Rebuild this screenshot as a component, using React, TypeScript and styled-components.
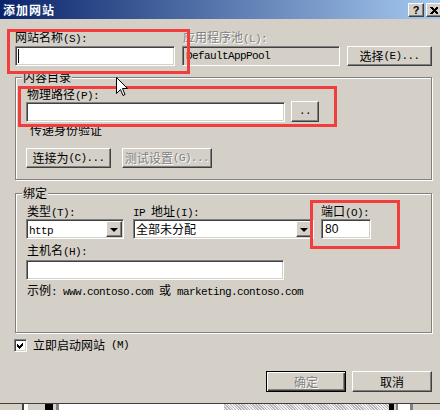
import React from 'react';
import styled, { createGlobalStyle, css } from 'styled-components';

const BG = '#d4d0c8';

const GlobalStyle = createGlobalStyle`
  html, body { margin: 0; padding: 0; background: ${BG}; }
  body { font-family: "Noto Sans CJK SC", "Liberation Sans", sans-serif; font-size: 12px; }
  * { box-sizing: border-box; }
`;

const Window = styled.div`
  position: relative;
  width: 440px;
  height: 410px;
  overflow: hidden;
  background: ${BG};
  display: flex;
  flex-direction: column;
  color: #000;
  font-family: "Noto Sans CJK SC", "Liberation Sans", sans-serif;
  font-size: 12px;
  line-height: 14px;
`;

const TitleBar = styled.div`
  flex: none;
  height: 19px;
  display: flex;
  align-items: flex-start;
  padding-left: 3px;
  background: linear-gradient(to right, #0a246a, #a6caf0);
`;

const Title = styled.div`
  flex: 1;
  margin-top: 2px;
  color: #fff;
  font-weight: bold;
  letter-spacing: 1px;
  line-height: 15px;
`;

const CaptionButtons = styled.div`
  display: flex;
  gap: 2px;
  margin: 3px -2px 0 0;
`;

const raised = css`
  border: 1px solid;
  border-color: #fff #404040 #404040 #fff;
  box-shadow: inset -1px -1px 0 #808080;
  background: ${BG};
`;

const sunken = css`
  border: 1px solid;
  border-color: #808080 #fff #fff #808080;
  box-shadow: inset 1px 1px 0 #404040, inset -1px -1px 0 ${BG};
`;

const CaptionButton = styled.div`
  ${raised};
  width: 16px;
  height: 14px;
  display: flex;
  align-items: center;
  justify-content: center;
  font-family: "Liberation Sans", sans-serif;
  font-weight: bold;
  font-size: 11px;
  line-height: 11px;
`;

const Content = styled.div`
  flex: 1;
  display: flex;
  flex-direction: column;
  padding: 11px 8px 0 15px;
`;

const Latin = styled.span`
  font-family: "Liberation Mono", monospace;
  font-size: 11px;
  letter-spacing: -0.6px;
  line-height: 1;
  white-space: pre;
`;

const disabledText = css`
  color: #808080;
  text-shadow: 1px 1px 0 #fff;
`;

const Label = styled.div<{ $disabled?: boolean; $indent?: number; $mt?: number }>`
  height: 14px;
  line-height: 14px;
  white-space: nowrap;
  padding-left: ${(p) => p.$indent ?? 0}px;
  margin-top: ${(p) => p.$mt ?? 0}px;
  ${(p) => p.$disabled && disabledText};
`;

const TopGrid = styled.div`
  display: grid;
  grid-template-columns: 160px 158px 85px;
  grid-template-rows: 14px 20px;
  column-gap: 7px;
  row-gap: 2px;
`;

const Field = styled.div<{ $w?: number; $disabled?: boolean; $mt?: number }>`
  ${sunken};
  width: ${(p) => (p.$w ? `${p.$w}px` : 'auto')};
  height: 20px;
  margin-top: ${(p) => p.$mt ?? 0}px;
  background: ${(p) => (p.$disabled ? BG : '#fff')};
  display: flex;
  align-items: center;
  padding: 0 2px 0 3px;
  white-space: nowrap;
`;

const Caret = styled.div`
  width: 1px;
  height: 14px;
  background: #000;
  margin-left: -1px;
`;

const Button = styled.div<{ $w: number; $h?: number; $default?: boolean; $disabled?: boolean }>`
  ${raised};
  width: ${(p) => p.$w}px;
  height: ${(p) => p.$h ?? 20}px;
  display: flex;
  align-items: center;
  justify-content: center;
  white-space: nowrap;
  ${(p) =>
    p.$default &&
    css`
      border: 1px solid #000;
      box-shadow: inset 1px 1px 0 #fff, inset -1px -1px 0 #404040, inset -2px -2px 0 #808080;
    `};
  ${(p) => p.$disabled && disabledText};
`;

const GroupBox = styled.div<{ $mt: number; $pb: number }>`
  margin-top: ${(p) => p.$mt}px;
  padding: 0 10px ${(p) => p.$pb}px 10px;
  border: 1px solid #808080;
  box-shadow: inset 1px 1px 0 #fff, 1px 1px 0 #fff;
`;

const Legend = styled.div`
  width: fit-content;
  margin: -8px 0 0 -4px;
  padding: 0 1px;
  height: 14px;
  background: ${BG};
  white-space: nowrap;
`;

const PathRow = styled.div`
  display: flex;
  align-items: flex-end;
  gap: 6px;
`;

const ButtonRow = styled.div<{ $mt: number; $gap: number }>`
  display: flex;
  gap: ${(p) => p.$gap}px;
  margin-top: ${(p) => p.$mt}px;
`;

const BindRow = styled.div`
  display: flex;
  margin-top: 4px;
`;

const BindCol = styled.div<{ $w: number; $ml?: number }>`
  width: ${(p) => p.$w}px;
  margin-left: ${(p) => p.$ml ?? 0}px;
  display: flex;
  flex-direction: column;
  gap: 1px;
`;

const Select = styled(Field)`
  padding: 1px 1px 1px 2px;
  justify-content: space-between;
`;

const SelectText = styled.div`
  flex: 1;
  line-height: 14px;
`;

const DropButton = styled.div`
  ${raised};
  flex: none;
  width: 16px;
  align-self: stretch;
  display: flex;
  align-items: center;
  justify-content: center;
`;

const DownArrow = styled.div`
  width: 0;
  height: 0;
  border-left: 4px solid transparent;
  border-right: 4px solid transparent;
  border-top: 4px solid #000;
  margin-top: 1px;
`;

const PortText = styled.span`
  font-family: "Liberation Sans", sans-serif;
  font-size: 12px;
`;

const CheckRow = styled.div`
  display: flex;
  align-items: center;
  gap: 6px;
  margin: 5px 0 0 -1px;
`;

const CheckBox = styled.div`
  ${sunken};
  width: 13px;
  height: 13px;
  background: #fff;
  display: flex;
  align-items: center;
  justify-content: center;
`;

const Footer = styled.div`
  display: flex;
  justify-content: flex-end;
  gap: 6px;
  margin-top: 19px;
`;

const Strip = styled.div`
  flex: none;
  height: 7px;
  display: flex;
  border-top: 1px solid #404040;
`;

const StripSeg = styled.div<{ $w: number; $c: string; $hatch?: boolean }>`
  width: ${(p) => p.$w}px;
  background: ${(p) => p.$c};
  ${(p) =>
    p.$hatch &&
    css`
      background-image: repeating-linear-gradient(45deg, #b8b8b8 0 1px, #f0f0f0 1px 2px);
    `};
`;

const Annotation = styled.div<{ $x: number; $y: number; $w: number; $h: number }>`
  position: absolute;
  left: ${(p) => p.$x}px;
  top: ${(p) => p.$y}px;
  width: ${(p) => p.$w}px;
  height: ${(p) => p.$h}px;
  border: 3px solid #f23d3d;
  pointer-events: none;
`;

const Cursor = styled.svg`
  position: absolute;
  left: 116px;
  top: 77px;
  pointer-events: none;
`;

function Txt({ children }: { children: string }) {
  const parts = children.split(/([\u0000-\u00ff]+)/).filter(Boolean);
  return (
    <>
      {parts.map((p, i) =>
        /^[\u0000-\u00ff]+$/.test(p) ? <Latin key={i}>{p}</Latin> : <span key={i}>{p}</span>
      )}
    </>
  );
}

const strip: [number, string, boolean?][] = [
  [22, BG],
  [2, '#404040'],
  [4, '#fff'],
  [17, BG],
  [8, '#000'],
  [3, BG],
  [3, '#808080'],
  [165, '#fff'],
  [165, '#e8e8e8', true],
  [5, '#000'],
  [2, BG],
  [2, '#808080'],
  [12, '#fff'],
  [3, '#808080'],
  [27, BG],
];

export default function App() {
  return (
    <>
      <GlobalStyle />
      <Window>
        <TitleBar>
          <Title>添加网站</Title>
          <CaptionButtons>
            <CaptionButton>?</CaptionButton>
            <CaptionButton>
              <svg width="8" height="7" viewBox="0 0 8 7" shapeRendering="crispEdges">
                <path d="M0 0h2l2 2 2-2h2v1L5.5 3.5 8 6v1H6L4 5 2 7H0V6l2.5-2.5L0 1z" fill="#000" />
              </svg>
            </CaptionButton>
          </CaptionButtons>
        </TitleBar>

        <Content>
          <TopGrid>
            <Label><Txt>网站名称(S):</Txt></Label>
            <Label $disabled $indent={1}><Txt>应用程序池(L):</Txt></Label>
            <div />
            <Field>
              <Caret />
            </Field>
            <Field $disabled>
              <Txt>DefaultAppPool</Txt>
            </Field>
            <Button $w={85}><Txt>选择(E)...</Txt></Button>
          </TopGrid>

          <GroupBox $mt={11} $pb={11}>
            <Legend>内容目录</Legend>
            <Label $indent={1} $mt={3}><Txt>物理路径(P):</Txt></Label>
            <PathRow>
              <Field $w={259} />
              <Button $w={28} $h={21}><Txt>..</Txt></Button>
            </PathRow>
            <Label $indent={4} $mt={1}>传递身份验证</Label>
            <ButtonRow $mt={11} $gap={11}>
              <Button $w={85}><Txt>连接为(C)...</Txt></Button>
              <Button $w={90} $disabled><Txt>测试设置(G)...</Txt></Button>
            </ButtonRow>
          </GroupBox>

          <GroupBox $mt={13} $pb={35}>
            <Legend>绑定</Legend>
            <BindRow>
              <BindCol $w={98}>
                <Label $indent={1}><Txt>类型(T):</Txt></Label>
                <Select>
                  <SelectText><Txt>http</Txt></SelectText>
                  <DropButton><DownArrow /></DropButton>
                </Select>
              </BindCol>
              <BindCol $w={181} $ml={9}>
                <Label><Txt>IP 地址(I):</Txt></Label>
                <Select>
                  <SelectText>全部未分配</SelectText>
                  <DropButton><DownArrow /></DropButton>
                </Select>
              </BindCol>
              <BindCol $w={50} $ml={7}>
                <Label><Txt>端口(O):</Txt></Label>
                <Field><PortText>80</PortText></Field>
              </BindCol>
            </BindRow>
            <Label $indent={1} $mt={4}><Txt>主机名(H):</Txt></Label>
            <Field $w={258} $mt={3} />
            <Label $indent={1} $mt={3}>
              <Txt>示例: www.contoso.com 或 marketing.contoso.com</Txt>
            </Label>
          </GroupBox>

          <CheckRow>
            <CheckBox>
              <svg width="7" height="7" viewBox="0 0 7 7" shapeRendering="crispEdges">
                <path d="M0 2l2 2 4-4v3L2 7 0 5z" fill="#000" />
              </svg>
            </CheckBox>
            <Txt>立即启动网站(M)</Txt>
          </CheckRow>

          <Footer>
            <Button $w={80} $h={21} $default $disabled>确定</Button>
            <Button $w={80} $h={21}>取消</Button>
          </Footer>
        </Content>

        <Strip>
          {strip.map(([w, c, h], i) => (
            <StripSeg key={i} $w={w} $c={c} $hatch={h} />
          ))}
        </Strip>

        <Annotation $x={7} $y={29} $w={183} $h={45} />
        <Annotation $x={18} $y={86} $w={319} $h={41} />
        <Annotation $x={310} $y={200} $w={90} $h={49} />

        <Cursor width="12" height="20" viewBox="0 0 12 20">
          <path
            d="M0.5 0.5V16.5L4.5 12.5L7 18.5L9 17.5L6.5 11.5H11.5Z"
            fill="#fff"
            stroke="#000"
            strokeWidth="1"
          />
        </Cursor>
      </Window>
    </>
  );
}
